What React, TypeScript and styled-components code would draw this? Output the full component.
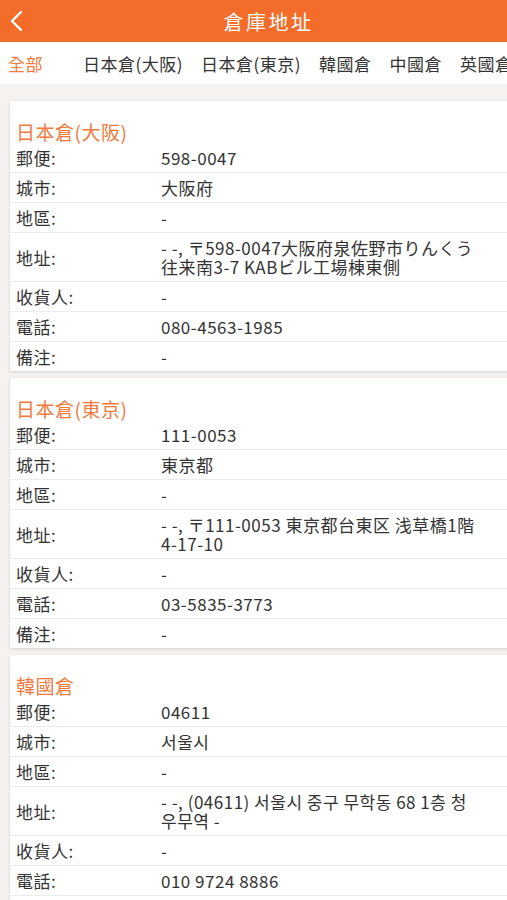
import { createGlobalStyle, styled } from "styled-components";

type Field = { label: string; value: string };
type Warehouse = { name: string; fields: Field[] };

const warehouses: Warehouse[] = [
  {
    name: "日本倉(大阪)",
    fields: [
      { label: "郵便:", value: "598-0047" },
      { label: "城市:", value: "大阪府" },
      { label: "地區:", value: "-" },
      { label: "地址:", value: "- -, 〒598-0047大阪府泉佐野市りんくう往来南3-7 KABビル工場棟東側" },
      { label: "收貨人:", value: "-" },
      { label: "電話:", value: "080-4563-1985" },
      { label: "備注:", value: "-" },
    ],
  },
  {
    name: "日本倉(東京)",
    fields: [
      { label: "郵便:", value: "111-0053" },
      { label: "城市:", value: "東京都" },
      { label: "地區:", value: "-" },
      { label: "地址:", value: "- -, 〒111-0053 東京都台東区 浅草橋1階 4-17-10" },
      { label: "收貨人:", value: "-" },
      { label: "電話:", value: "03-5835-3773" },
      { label: "備注:", value: "-" },
    ],
  },
  {
    name: "韓國倉",
    fields: [
      { label: "郵便:", value: "04611" },
      { label: "城市:", value: "서울시" },
      { label: "地區:", value: "-" },
      { label: "地址:", value: "- -, (04611) 서울시 중구 무학동 68 1층 청우무역 -" },
      { label: "收貨人:", value: "-" },
      { label: "電話:", value: "010 9724 8886" },
      { label: "備注:", value: "-" },
    ],
  },
];

const tabs = ["全部", "日本倉(大阪)", "日本倉(東京)", "韓國倉", "中國倉", "英國倉"];

const GlobalStyle = createGlobalStyle`
  body {
    margin: 0;
    background: #f6f2f0;
    font-family: "Noto Sans CJK TC", "Noto Sans", sans-serif;
    color: #333;
    overflow-x: hidden;
  }
`;

function App() {
  return (
    <Page>
      <GlobalStyle />
      <Header>
        <BackButton>
          <svg width="14" height="22" viewBox="0 0 14 22">
            <polyline
              points="12,2 3,11 12,20"
              fill="none"
              stroke="#fff"
              strokeWidth="2.4"
              strokeLinecap="round"
              strokeLinejoin="round"
            />
          </svg>
        </BackButton>
        <Title>倉庫地址</Title>
      </Header>
      <TabBar>
        {tabs.map((t, i) => (
          <Tab key={i} $active={i == 0}>
            {t}
          </Tab>
        ))}
      </TabBar>
      <List>
        {warehouses.map((w, i) => (
          <Card key={i}>
            <CardTitle>{w.name}</CardTitle>
            {w.fields.map((f, j) => (
              <Row key={j}>
                <Label>{f.label}</Label>
                <Value>{f.value}</Value>
              </Row>
            ))}
          </Card>
        ))}
      </List>
    </Page>
  );
}

const Page = styled.div`
  display: flex;
  flex-direction: column;
`;

const Header = styled.div`
  position: relative;
  height: 42px;
  background: #f46c2a;
  display: flex;
  align-items: center;
  justify-content: center;
  padding-left: 30px;
`;

const BackButton = styled.div`
  position: absolute;
  left: 9px;
  top: 10px;
  display: flex;
`;

const Title = styled.h1`
  margin: 0;
  color: #fff;
  font-size: 20px;
  font-weight: 400;
  letter-spacing: 2.5px;
`;

const TabBar = styled.div`
  height: 42px;
  background: #fff;
  display: flex;
  align-items: center;
  gap: 18px;
  padding-left: 8px;
  overflow: hidden;
  white-space: nowrap;
`;

const Tab = styled.div<{ $active?: boolean }>`
  font-size: 17px;
  letter-spacing: 0.5px;
  color: ${(p) => (p.$active ? "#f27a3e" : "#333")};
  min-width: ${(p) => (p.$active ? "57px" : "0")};
  flex-shrink: 0;
`;

const List = styled.div`
  display: flex;
  flex-direction: column;
  gap: 7px;
  padding: 17px 0 20px 10px;
`;

const Card = styled.div`
  background: #fff;
  margin-right: -20px;
  box-shadow: 0 1px 3px rgba(0, 0, 0, 0.15);
`;

const CardTitle = styled.div`
  padding: 19px 6px 0;
  line-height: 23px;
  font-size: 19px;
  letter-spacing: 0.5px;
  color: #f27a3e;
`;

const Row = styled.div`
  display: flex;
  align-items: center;
  padding: 5px 0 5px 6px;
  min-height: 19px;
  border-bottom: 1px solid #ececec;
  font-size: 17px;
  letter-spacing: 0.5px;
  line-height: 19px;
  &:last-child {
    border-bottom: none;
  }
`;

const Label = styled.div`
  width: 145px;
  flex-shrink: 0;
`;

const Value = styled.div`
  width: 317px;
  word-break: break-all;
`;

export default App;
